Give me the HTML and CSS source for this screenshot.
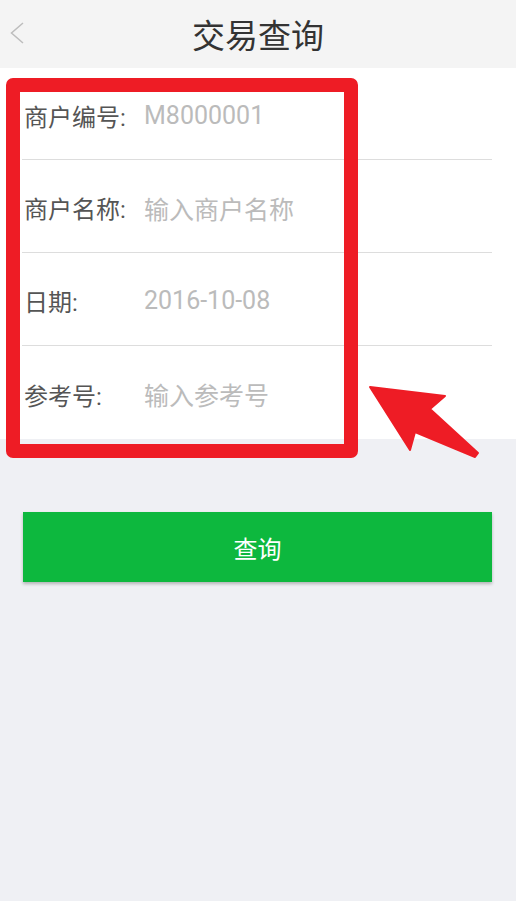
FILE: index.html
```html
<!DOCTYPE html>
<html>
<head>
  <meta charset="utf-8">
  <title>交易查询</title>
  <link rel="stylesheet" href="styles.css">
</head>
<body>
  <div class="page">
    <div class="nav-bar">
      <a class="back" href="#">
        <svg width="14" height="22" viewBox="0 0 14 22">
          <polyline points="13,1 1.5,11 13,21" fill="none" stroke="#bdbdbd" stroke-width="1.5"/>
        </svg>
      </a>
      <h1>交易查询</h1>
    </div>

    <div class="query-form">
      <div class="form-row">
        <span class="label">商户编号:</span>
        <span class="value">M8000001</span>
      </div>
      <div class="form-row">
        <span class="label">商户名称:</span>
        <span class="value">输入商户名称</span>
      </div>
      <div class="form-row">
        <span class="label">日期:</span>
        <span class="value">2016-10-08</span>
      </div>
      <div class="form-row">
        <span class="label">参考号:</span>
        <span class="value">输入参考号</span>
      </div>
    </div>

    <div class="actions">
      <button class="query-btn">查询</button>
    </div>

    <!-- red callout box and arrow drawn over the form -->
    <div class="highlight-box"></div>
    <svg class="highlight-arrow" width="120" height="80" viewBox="0 0 120 80">
      <polygon points="5,5 80,14 65,27 113,71 110,75 50,50 45,68" fill="#ee1c25" stroke="#ee1c25" stroke-width="2" stroke-linejoin="round"/>
    </svg>
  </div>
</body>
</html>
```

FILE: styles.css
```css
* {
  margin: 0;
  padding: 0;
  box-sizing: border-box;
}

body {
  font-family: Roboto, "Noto Sans CJK SC", sans-serif;
  background-color: #eff0f4;
  color: #555555;
}

.page {
  position: relative;
  min-height: 901px;
}

.nav-bar {
  position: relative;
  height: 68px;
  background-color: #f4f4f4;
  display: flex;
  justify-content: center;
  align-items: center;
}

.nav-bar h1 {
  font-size: 33px;
  font-weight: normal;
  color: #333333;
}

.nav-bar .back {
  position: absolute;
  left: 10px;
  top: 22px;
  display: block;
  width: 14px;
  height: 22px;
}

.query-form {
  background-color: #ffffff;
}

.form-row {
  display: flex;
  align-items: center;
  height: 93px;
  margin: 0 24px 0 22px;
  padding-left: 2px;
  padding-top: 3px;
  border-bottom: 1px solid #dddddd;
  font-size: 24px;
}

.form-row:first-child {
  height: 92px;
}

.form-row:last-child {
  border-bottom: none;
}

.form-row .label {
  width: 120px;
  color: #555555;
}

.form-row .value {
  font-size: 25px;
  color: #bbbbbb;
}

.actions {
  padding: 73px 24px 0 23px;
}

.query-btn {
  display: block;
  width: 100%;
  height: 70px;
  border: none;
  background-color: #0db83e;
  color: #ffffff;
  font-family: Roboto, "Noto Sans CJK SC", sans-serif;
  font-size: 24px;
  box-shadow: 0 2px 3px rgba(0, 0, 0, 0.25);
}

.highlight-box {
  position: absolute;
  left: 6px;
  top: 78px;
  width: 352px;
  height: 380px;
  border: 14px solid #ee1c25;
  border-radius: 7px;
}

.highlight-arrow {
  position: absolute;
  left: 365px;
  top: 382px;
}
```
